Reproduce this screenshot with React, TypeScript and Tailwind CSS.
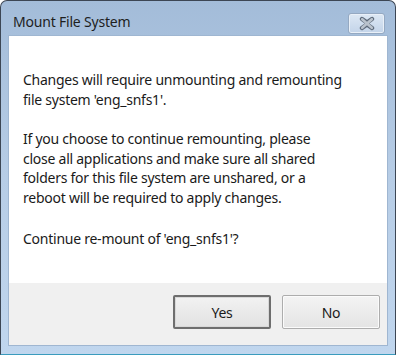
import React, { ReactElement } from 'react'

function CloseGlyph(): ReactElement {
  return (
    <svg width="18" height="15" viewBox="0 0 18 15">
      <path
        d="M4 3 L9 6.6 L14 3 M4 12 L9 8.4 L14 12"
        stroke="#5e6b7b"
        strokeWidth="4.4"
        fill="none"
        strokeLinecap="round"
      />
      <path
        d="M4.2 3.2 L13.8 11.8 M13.8 3.2 L4.2 11.8"
        stroke="#b9c2cc"
        strokeWidth="2.6"
        fill="none"
        strokeLinecap="round"
      />
    </svg>
  )
}

function DialogButton({ label, isDefault }: { label: string; isDefault?: boolean }): ReactElement {
  return (
    <button
      className={
        isDefault
          ? 'w-[98px] h-[34px] rounded-[2px] border-2 border-[#6e6e6e] bg-gradient-to-b from-[#f2f2f2] to-[#e2e2e2] text-[14px] tracking-[-0.2px] text-[#1a1a1a] shadow-[inset_0_0_0_1px_#d8d8d8]'
          : 'w-[98px] h-[34px] rounded-[2px] border border-[#adadad] bg-gradient-to-b from-[#f4f4f4] to-[#e4e4e4] text-[14px] tracking-[-0.2px] text-[#1a1a1a] shadow-[inset_0_0_0_1px_#fbfbfb]'
      }
    >
      {label}
    </button>
  )
}

export default function App(): ReactElement {
  return (
    <div
      className="w-[396px] h-[355px] flex flex-col rounded-t-[7px] border border-[#3c4654] border-b-[#3a9bbd] bg-gradient-to-b from-[#a3bcd9] via-[#b7cde6] to-[#c0d6ee] overflow-hidden"
      style={{ fontFamily: '"Noto Sans", "Open Sans", sans-serif' }}
    >
      <div className="h-[34px] flex items-center justify-between pl-[12px] pr-[10px]">
        <span className="text-[14px] tracking-[-0.2px] text-[#1e1e1e] mt-[6px]">Mount File System</span>
        <div className="w-[37px] h-[21px] mt-[10px] rounded-[3px] border border-[#95a9c2] bg-gradient-to-b from-[#dde8f4] to-[#c3d4e9] flex items-center justify-center shadow-[inset_0_0_0_1px_#e9f0f8]">
          <CloseGlyph />
        </div>
      </div>
      <div className="flex-1 flex px-[7px]">
        <div className="flex-1 flex flex-col border border-[#9fb6d1]">
          <div className="h-[247px] bg-white pl-[14px] pt-[34px] text-[14px] tracking-[-0.25px] leading-[19.5px] text-[#1a1a1a]">
            <p>
              Changes will require unmounting and remounting
              <br />
              file system 'eng_snfs1'.
            </p>
            <p className="mt-[20px]">
              If you choose to continue remounting, please
              <br />
              close all applications and make sure all shared
              <br />
              folders for this file system are unshared, or a
              <br />
              reboot will be required to apply changes.
            </p>
            <p className="mt-[22px]">Continue re-mount of 'eng_snfs1'?</p>
          </div>
          <div className="flex-1 bg-[#f0f0f0] flex justify-end items-start gap-[11px] pt-[12px] pr-[7px]">
            <DialogButton label="Yes" isDefault />
            <DialogButton label="No" />
          </div>
        </div>
      </div>
      <div className="h-[8px]" />
    </div>
  )
}
